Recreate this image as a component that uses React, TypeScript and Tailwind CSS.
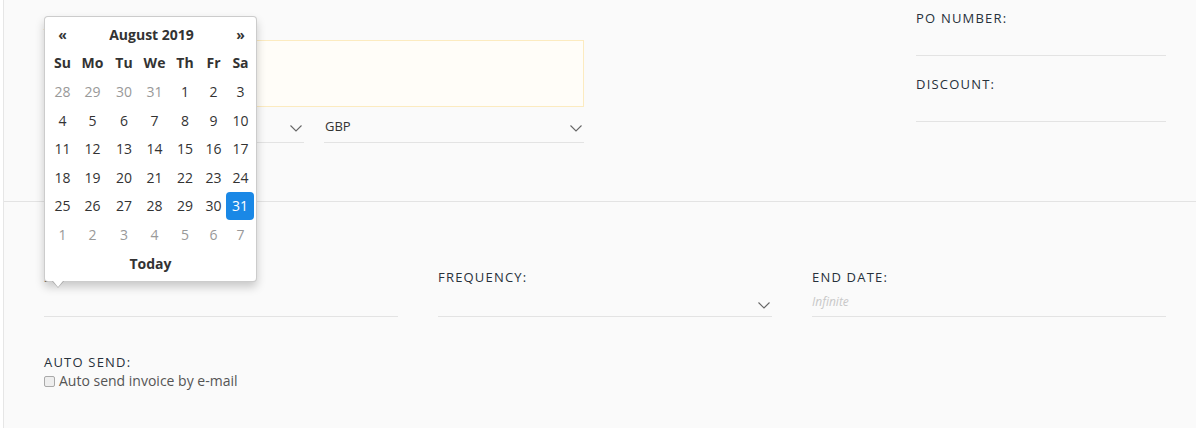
import React from "react";

const weekDays = ["Su", "Mo", "Tu", "We", "Th", "Fr", "Sa"];

type Day = { n: number; muted?: boolean; active?: boolean };

const weeks: Day[][] = [
  [{ n: 28, muted: true }, { n: 29, muted: true }, { n: 30, muted: true }, { n: 31, muted: true }, { n: 1 }, { n: 2 }, { n: 3 }],
  [{ n: 4 }, { n: 5 }, { n: 6 }, { n: 7 }, { n: 8 }, { n: 9 }, { n: 10 }],
  [{ n: 11 }, { n: 12 }, { n: 13 }, { n: 14 }, { n: 15 }, { n: 16 }, { n: 17 }],
  [{ n: 18 }, { n: 19 }, { n: 20 }, { n: 21 }, { n: 22 }, { n: 23 }, { n: 24 }],
  [{ n: 25 }, { n: 26 }, { n: 27 }, { n: 28 }, { n: 29 }, { n: 30 }, { n: 31, active: true }],
  [{ n: 1, muted: true }, { n: 2, muted: true }, { n: 3, muted: true }, { n: 4, muted: true }, { n: 5, muted: true }, { n: 6, muted: true }, { n: 7, muted: true }],
];

const cols = "grid grid-cols-[27px_33px_30px_31px_30px_27px_27px]";

function Chevron() {
  return (
    <svg width="12" height="7" viewBox="0 0 12 7" className="shrink-0">
      <polyline points="0.5,0.5 6,6 11.5,0.5" fill="none" stroke="#666" strokeWidth="1.1" />
    </svg>
  );
}

function Label({ children }: { children: React.ReactNode }) {
  return (
    <p className="text-[13px] leading-4 tracking-[1.2px] text-[#27313b]">{children}</p>
  );
}

function DatePicker() {
  return (
    <div className="absolute left-[44px] top-[16px] z-10 w-[213px] rounded-[4px] border border-black/20 bg-white px-[4px] pb-[4px] pt-[3px] text-[14px] text-[#333] shadow-[0_5px_10px_rgba(0,0,0,0.2)]">
      <div className={`${cols} h-[28.6px] items-center font-bold`}>
        <span className="text-center">«</span>
        <span className="col-span-5 text-center">August 2019</span>
        <span className="text-center">»</span>
      </div>
      <div className={`${cols} h-[28.6px] items-center font-bold`}>
        {weekDays.map((d) => (
          <span key={d} className="text-center">
            {d}
          </span>
        ))}
      </div>
      {weeks.map((week, i) => (
        <div key={i} className={`${cols} h-[28.6px] items-center`}>
          {week.map((day, j) => (
            <span
              key={j}
              className={
                day.active
                  ? "-ml-[1px] flex h-[28px] items-center justify-center rounded-[4px] bg-[#1a88e6] text-white"
                  : day.muted
                    ? "text-center text-[#999]"
                    : "text-center"
              }
            >
              {day.n}
            </span>
          ))}
        </div>
      ))}
      <div className="flex h-[28.6px] items-center justify-center font-bold">Today</div>
      <span className="absolute -bottom-[7px] left-[7px] h-0 w-0 border-x-[6px] border-t-[7px] border-x-transparent border-t-black/20" />
      <span className="absolute -bottom-[6px] left-[8px] h-0 w-0 border-x-[5px] border-t-[6px] border-x-transparent border-t-white" />
    </div>
  );
}

export default function App() {
  return (
    <div
      className="relative h-[428px] w-[1196px] overflow-hidden bg-white"
      style={{ fontFamily: '"Open Sans", "Liberation Sans", sans-serif' }}
    >
      <div className="ml-[3px] h-full border-l border-[#e6e6e6] bg-[#fafafa]">
        {/* top section */}
        <div className="flex h-[198px] justify-between pl-[40px] pr-[30px] pt-[10px]">
          <div className="w-[540px]">
            <div className="h-[30px] pt-[7px]">
              <Label>ADDRESS:</Label>
            </div>
            <div className="h-[67px] border border-[#fcebc0] bg-[#fffdf8]" />
            <div className="mt-[8px] flex gap-[20px]">
              <div className="flex h-[28px] flex-1 items-center justify-between border-b border-[#e3e3e3] pl-[1px] pr-[2px] text-[13px] text-[#333]">
                <span>English</span>
                <Chevron />
              </div>
              <div className="flex h-[28px] flex-1 items-center justify-between border-b border-[#e3e3e3] pl-[1px] pr-[2px] text-[13px] text-[#333]">
                <span className="-mt-[4px]">GBP</span>
                <Chevron />
              </div>
            </div>
          </div>
          <div className="w-[250px]">
            <Label>PO NUMBER:</Label>
            <div className="mt-[4px] h-[26px] border-b border-[#e3e3e3]" />
            <div className="mt-[20px]">
              <Label>DISCOUNT:</Label>
            </div>
            <div className="mt-[4px] h-[26px] border-b border-[#e3e3e3]" />
          </div>
        </div>
        <div className="h-[4px] border-b border-[#e3e3e3]" />

        {/* bottom section */}
        <div className="pl-[40px] pr-[30px] pt-[27px]">
          <p className="text-[13px] leading-4 text-[#333]">Schedule</p>
          <div className="mt-[24px] flex gap-[40px]">
            <div className="w-[354px]">
              <Label>START DATE:</Label>
              <div className="mt-[7px] h-[25px] border-b border-[#e3e3e3]" />
            </div>
            <div className="w-[334px]">
              <Label>FREQUENCY:</Label>
              <div className="mt-[7px] flex h-[25px] items-center justify-end border-b border-[#e3e3e3] pr-[2px] pt-[2px]">
                <Chevron />
              </div>
            </div>
            <div className="w-[354px]">
              <Label>END DATE:</Label>
              <div className="mt-[7px] flex h-[25px] items-center border-b border-[#e3e3e3] pb-[5px]">
                <span className="text-[12px] italic text-[#c8c8c8]">Infinite</span>
              </div>
            </div>
          </div>
          <div className="mt-[37px]">
            <Label>AUTO SEND:</Label>
            <label className="mt-[2px] flex items-center gap-[4px] text-[14px] leading-[18px] text-[#555]">
              <span className="h-[11px] w-[11px] rounded-[2px] border border-[#a9a9a9] bg-[#eeeeee]" />
              Auto send invoice by e-mail
            </label>
          </div>
        </div>
      </div>
      <DatePicker />
    </div>
  );
}
